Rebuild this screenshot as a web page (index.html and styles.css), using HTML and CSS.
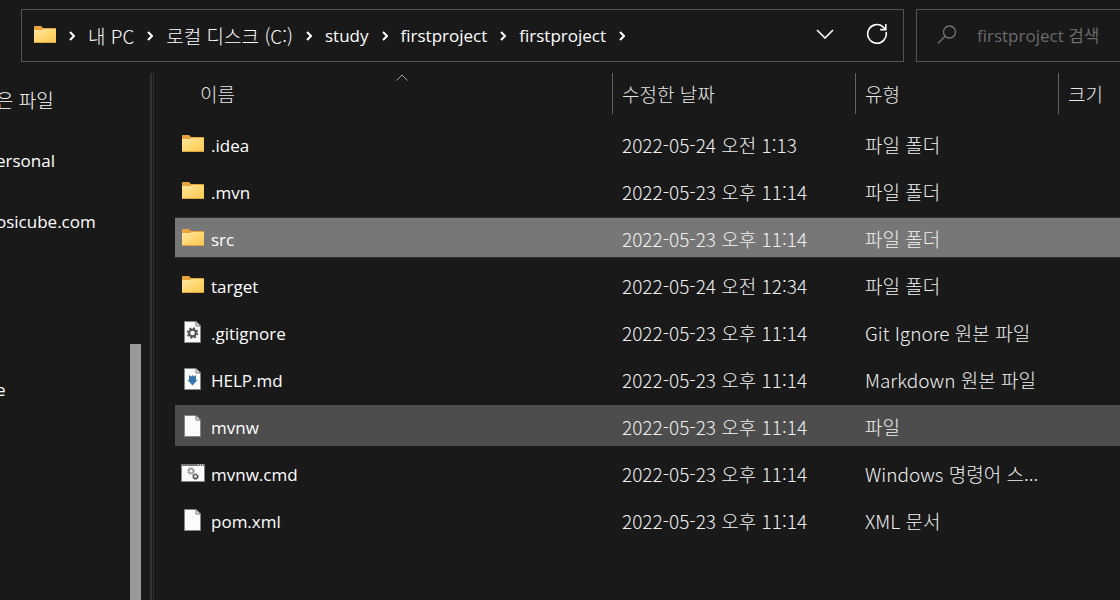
FILE: index.html
```html
<!DOCTYPE html>
<html lang="ko">
<head>
  <meta charset="UTF-8">
  <title>firstproject</title>
  <link rel="stylesheet" href="styles.css">
</head>
<body>
  <svg class="sprite" aria-hidden="true">
    <defs>
      <linearGradient id="folder-front" x1="0" y1="0" x2="1" y2="1">
        <stop offset="0" stop-color="#ffe7a4"/>
        <stop offset="0.55" stop-color="#ffd56c"/>
        <stop offset="1" stop-color="#f7c754"/>
      </linearGradient>
      <symbol id="folder" viewBox="0 0 22 17">
        <path d="M0 1Q0 0 1 0H7L9 2H21Q22 2 22 3V8H0Z" fill="#e8a33d"/>
        <path d="M0 4H8L9.5 3H22V16Q22 17 21 17H1Q0 17 0 16Z" fill="url(#folder-front)"/>
        <path d="M0 16H22Q22 17 21 17H1Q0 17 0 16Z" fill="#e0a440"/>
      </symbol>
      <symbol id="page" viewBox="0 0 17 22">
        <path d="M0.5 0.5H12L16.5 5V21.5H0.5Z" fill="#fafbfb" stroke="#858585"/>
        <path d="M12 0.5V5H16.5Z" fill="#eee" stroke="#777"/>
      </symbol>
      <symbol id="gear" viewBox="-6 -6 12 12">
        <circle r="3.4" fill="none" stroke="#555" stroke-width="2.2"/>
        <circle r="5" fill="none" stroke="#555" stroke-width="1.6" stroke-dasharray="2 1.927"/>
      </symbol>
    </defs>
  </svg>

  <div class="explorer">
    <div class="toolbar">
      <nav class="address">
        <svg class="folder" width="22" height="17"><use href="#folder"/></svg>
        <svg class="arrow" viewBox="0 0 6 10"><path d="M1 1L5 5L1 9"/></svg>
        <a href="#">내 PC</a>
        <svg class="arrow" viewBox="0 0 6 10"><path d="M1 1L5 5L1 9"/></svg>
        <a href="#">로컬 디스크 (C:)</a>
        <svg class="arrow" viewBox="0 0 6 10"><path d="M1 1L5 5L1 9"/></svg>
        <a class="latin" href="#">study</a>
        <svg class="arrow" viewBox="0 0 6 10"><path d="M1 1L5 5L1 9"/></svg>
        <a class="latin" href="#">firstproject</a>
        <svg class="arrow" viewBox="0 0 6 10"><path d="M1 1L5 5L1 9"/></svg>
        <a class="latin" href="#">firstproject</a>
        <svg class="arrow" viewBox="0 0 6 10"><path d="M1 1L5 5L1 9"/></svg>
        <div class="tools">
          <button type="button" aria-label="이전 위치">
            <svg width="18" height="10" viewBox="0 0 18 10"><path d="M1 1L9 9L17 1"/></svg>
          </button>
          <button type="button" aria-label="새로 고침">
            <svg width="22" height="22" viewBox="0 0 22 22"><path d="M20.1 9A9.3 9.3 0 1 1 17 3.8L19.5 6.3M19.8 1V6.6H14.2"/></svg>
          </button>
        </div>
      </nav>
      <label class="search">
        <svg width="20" height="19" viewBox="0 0 20 19"><circle cx="12.5" cy="7" r="6"/><path d="M8.2 11.3L1 18.3"/></svg>
        <input class="latin" type="search" placeholder="firstproject 검색" aria-label="firstproject 검색">
      </label>
    </div>

    <div class="content">
      <aside class="sidebar">
        <ul class="places">
          <li>은 파일</li>
          <li class="latin">ersonal</li>
          <li class="latin">osicube.com</li>
          <li class="latin place-last">e</li>
        </ul>
        <div class="scrollbar"></div>
      </aside>
      <div class="splitter"></div>

      <main class="files">
        <table>
          <colgroup>
            <col>
            <col class="col-date">
            <col class="col-type">
            <col class="col-size">
          </colgroup>
          <thead>
            <tr>
              <th>
                <div class="head head-name">이름
                  <svg class="sort" width="12" height="7" viewBox="0 0 12 7"><path d="M0.5 6.5L6 1L11.5 6.5"/></svg>
                </div>
              </th>
              <th><div class="head">수정한 날짜</div></th>
              <th><div class="head">유형</div></th>
              <th><div class="head">크기</div></th>
            </tr>
          </thead>
          <tbody>
            <tr>
              <td><div class="name latin"><span class="icon"><svg width="22" height="17"><use href="#folder"/></svg></span>.idea</div></td>
              <td>2022-05-24 오전 1:13</td>
              <td>파일 폴더</td>
              <td></td>
            </tr>
            <tr>
              <td><div class="name latin"><span class="icon"><svg width="22" height="17"><use href="#folder"/></svg></span>.mvn</div></td>
              <td>2022-05-23 오후 11:14</td>
              <td>파일 폴더</td>
              <td></td>
            </tr>
            <tr class="selected">
              <td><div class="name latin"><span class="icon"><svg width="22" height="17"><use href="#folder"/></svg></span>src</div></td>
              <td>2022-05-23 오후 11:14</td>
              <td>파일 폴더</td>
              <td></td>
            </tr>
            <tr>
              <td><div class="name latin"><span class="icon"><svg width="22" height="17"><use href="#folder"/></svg></span>target</div></td>
              <td>2022-05-24 오전 12:34</td>
              <td>파일 폴더</td>
              <td></td>
            </tr>
            <tr>
              <td><div class="name latin"><span class="icon"><svg width="18" height="22"><use href="#page" width="17" height="22"/><use href="#gear" x="2.5" y="6" width="12" height="12"/></svg></span>.gitignore</div></td>
              <td>2022-05-23 오후 11:14</td>
              <td>Git Ignore 원본 파일</td>
              <td></td>
            </tr>
            <tr>
              <td><div class="name latin"><span class="icon"><svg width="18" height="22"><use href="#page" width="17" height="22"/><path d="M5 7L7 8.5L8.5 7L10 8.5L12 7V12H13.5L8.5 17.5L3.5 12H5Z" fill="#3a74ac"/></svg></span>HELP.md</div></td>
              <td>2022-05-23 오후 11:14</td>
              <td>Markdown 원본 파일</td>
              <td></td>
            </tr>
            <tr class="hover">
              <td><div class="name latin"><span class="icon"><svg width="18" height="22"><use href="#page" width="17" height="22"/></svg></span>mvnw</div></td>
              <td>2022-05-23 오후 11:14</td>
              <td>파일</td>
              <td></td>
            </tr>
            <tr>
              <td><div class="name latin"><span class="icon"><svg width="24" height="18"><path d="M0.5 0.5H23.5V17.5H0.5Z" fill="#fafbfb" stroke="#858585"/><path d="M0 0H24V2H0Z" fill="#777"/><path d="M17 1H18M19 1H20M21 1H22" stroke="#fff"/><use href="#gear" x="6" y="3" width="8" height="8" opacity="0.6"/><use href="#gear" x="11" y="9" width="7" height="7"/></svg></span>mvnw.cmd</div></td>
              <td>2022-05-23 오후 11:14</td>
              <td>Windows 명령어 스...</td>
              <td></td>
            </tr>
            <tr>
              <td><div class="name latin"><span class="icon"><svg width="18" height="22"><use href="#page" width="17" height="22"/></svg></span>pom.xml</div></td>
              <td>2022-05-23 오후 11:14</td>
              <td>XML 문서</td>
              <td></td>
            </tr>
          </tbody>
        </table>
      </main>
    </div>
  </div>
</body>
</html>
```
FILE: styles.css
```css
body {
  margin: 0;
  background-color: #191919;
  color: #fff;
  font-family: 'Noto Sans CJK KR', sans-serif;
  font-size: 19px;
  font-weight: 300;
  line-height: 24px;
}
.latin {
  font-family: 'Open Sans', 'Noto Sans CJK KR', sans-serif;
  font-size: 17px;
  font-weight: 400;
}
.sprite {
  position: absolute;
  width: 0;
  height: 0;
}
.explorer {
  display: flex;
  flex-direction: column;
  height: 100vh;
  overflow: hidden;
}

/* toolbar */
.toolbar {
  display: flex;
  gap: 12px;
  padding: 9px 0 11px 21px;
}
.address, .search {
  display: flex;
  align-items: center;
  box-sizing: border-box;
  height: 53px;
  border: 1px solid #535353;
}
.address {
  flex: 1;
  gap: 13px;
  padding: 0 15px 0 12px;
}
.address .folder {
  margin-bottom: 2px;
}
.address a {
  color: #fff;
  text-decoration: none;
  white-space: nowrap;
}
.arrow {
  width: 6px;
  height: 10px;
  fill: none;
  stroke: #fff;
  stroke-width: 2;
}
.tools {
  display: flex;
  align-items: center;
  gap: 32px;
  margin-left: auto;
  padding-bottom: 4px;
}
.tools button {
  display: flex;
  padding: 0;
  border: none;
  background: none;
  cursor: pointer;
}
.tools svg {
  fill: none;
  stroke: #fff;
  stroke-width: 1.6;
}
.search {
  width: 204px;
  gap: 20px;
  padding-left: 20px;
  border-right: none;
}
.search svg {
  flex: none;
  margin-bottom: 2px;
  fill: none;
  stroke: #77737a;
  stroke-width: 1.3;
}
.search input {
  flex: 1;
  min-width: 0;
  padding: 0;
  border: none;
  outline: none;
  background: none;
  color: #fff;
}
.search input::placeholder {
  color: #6c6a6e;
  opacity: 1;
}

/* sidebar */
.content {
  display: flex;
  flex: 1;
  min-height: 0;
}
.sidebar {
  display: flex;
  justify-content: space-between;
  width: 141px;
  overflow: hidden;
}
.places {
  margin: 0 0 0 -4px;
  padding: 0;
  list-style: none;
}
.places li {
  height: 61px;
  line-height: 54px;
  white-space: nowrap;
}
.places .place-last {
  margin-top: 107px;
}
.scrollbar {
  width: 11px;
  margin-top: 271px;
  background-color: #999;
}
.splitter {
  width: 1px;
  margin: 0 21px 0 9px;
  border-left: 2px solid #333;
  border-right: 1px dotted #444;
}

/* file list */
.files {
  flex: 1;
  min-width: 0;
}
table {
  width: 100%;
  table-layout: fixed;
  border-spacing: 0;
}
.col-date {
  width: 243px;
}
.col-type {
  width: 203px;
}
.col-size {
  width: 62px;
}
th {
  padding: 0 0 6px;
  font-weight: 300;
  text-align: left;
}
.head {
  height: 41px;
  padding-left: 9px;
  border-left: 1px solid #636363;
  color: #e6e6e6;
  line-height: 42px;
}
.head-name {
  position: relative;
  margin-left: 15px;
  border-left-color: transparent;
}
.sort {
  position: absolute;
  top: 1px;
  left: 50%;
  margin-left: -6px;
  fill: none;
  stroke: #aaa;
}
td {
  box-sizing: border-box;
  height: 47px;
  padding: 2px 0 0 10px;
  border: solid transparent;
  border-width: 3px 0;
  background-clip: padding-box;
  color: #f0f0f0;
  white-space: nowrap;
}
td:first-child {
  padding: 4px 0 0 6px;
  color: #fff;
}
.name {
  display: flex;
  align-items: center;
  gap: 6px;
}
.icon {
  display: flex;
  justify-content: center;
  width: 24px;
  margin-bottom: 4px;
}
.selected td {
  background-color: #777;
  box-shadow: inset 0 1px #333, inset 0 -1px #333;
}
.hover td {
  background-color: #4d4d4d;
}
```
